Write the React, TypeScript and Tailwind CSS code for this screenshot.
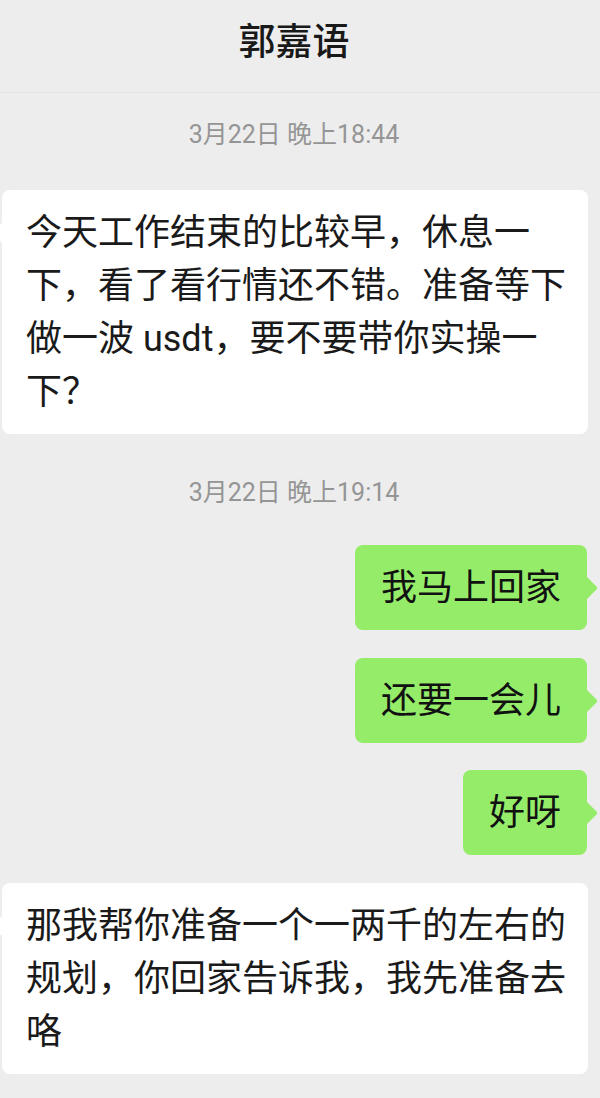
const font = { fontFamily: "Roboto, 'Noto Sans CJK SC', 'Noto Sans', sans-serif" }

type Msg =
    | { kind: 'time'; text: string; className: string }
    | { kind: 'in' | 'out'; text: string; className: string }

const messages: Msg[] = [
    { kind: 'time', text: '3月22日 晚上18:44', className: 'mt-[27px]' },
    {
        kind: 'in',
        text: '今天工作结束的比较早，休息一下，看了看行情还不错。准备等下做一波 usdt，要不要带你实操一下？',
        className: 'mt-[40px]',
    },
    { kind: 'time', text: '3月22日 晚上19:14', className: 'mt-[44px]' },
    { kind: 'out', text: '我马上回家', className: 'mt-[37px]' },
    { kind: 'out', text: '还要一会儿', className: 'mt-[28px]' },
    { kind: 'out', text: '好呀', className: 'mt-[27px]' },
    {
        kind: 'in',
        text: '那我帮你准备一个一两千的左右的规划，你回家告诉我，我先准备去咯',
        className: 'mt-[28px]',
    },
]

function TimeStamp({ text, className }: { text: string; className: string }) {
    return (
        <div className={`h-[30px] pr-[12px] text-center text-[25px] leading-[30px] text-[#959595] ${className}`}>
            {text}
        </div>
    )
}

function Incoming({ text, className }: { text: string; className: string }) {
    return (
        <div className={`flex pl-[2px] ${className}`}>
            <div className="relative w-fit max-w-[586px] rounded-[8px] bg-white pl-[24px] pr-[20px] pt-[17px] pb-[15px] text-[36px] leading-[53px] text-[#1a1a1a]">
                {/* tail */}
                <svg className="absolute -left-[10px] top-[32px]" width="11" height="22" viewBox="0 0 11 22">
                    <path d="M11 0 L1.5 9.5 Q0 11 1.5 12.5 L11 22 Z" fill="#ffffff" />
                </svg>
                {text}
            </div>
        </div>
    )
}

function Outgoing({ text, className }: { text: string; className: string }) {
    return (
        <div className={`flex justify-end pr-[13px] ${className}`}>
            <div className="relative w-fit max-w-[500px] rounded-[8px] bg-[#95ec69] px-[26px] pt-[17px] pb-[15px] text-[36px] leading-[53px] text-[#111111]">
                {text}
                {/* tail */}
                <svg className="absolute -right-[11px] top-[32px]" width="11" height="22" viewBox="0 0 11 22">
                    <path d="M0 0 L9.5 9.5 Q11 11 9.5 12.5 L0 22 Z" fill="#95ec69" />
                </svg>
            </div>
        </div>
    )
}

export default function App() {
    return (
        <div className="h-[1098px] w-[600px] overflow-hidden bg-[#ededed]" style={font}>
            {/* Header */}
            <div className="flex h-[93px] items-center justify-center border-b border-[#e3e3e3] pb-[8px] pr-[12px]">
                <span className="text-[37px] font-medium leading-none text-[#191919]">郭嘉语</span>
            </div>

            {/* Messages */}
            <div className="flex flex-col">
                {messages.map((m, i) => {
                    if (m.kind === 'time') return <TimeStamp key={i} text={m.text} className={m.className} />
                    if (m.kind === 'in') return <Incoming key={i} text={m.text} className={m.className} />
                    return <Outgoing key={i} text={m.text} className={m.className} />
                })}
            </div>
        </div>
    )
}
